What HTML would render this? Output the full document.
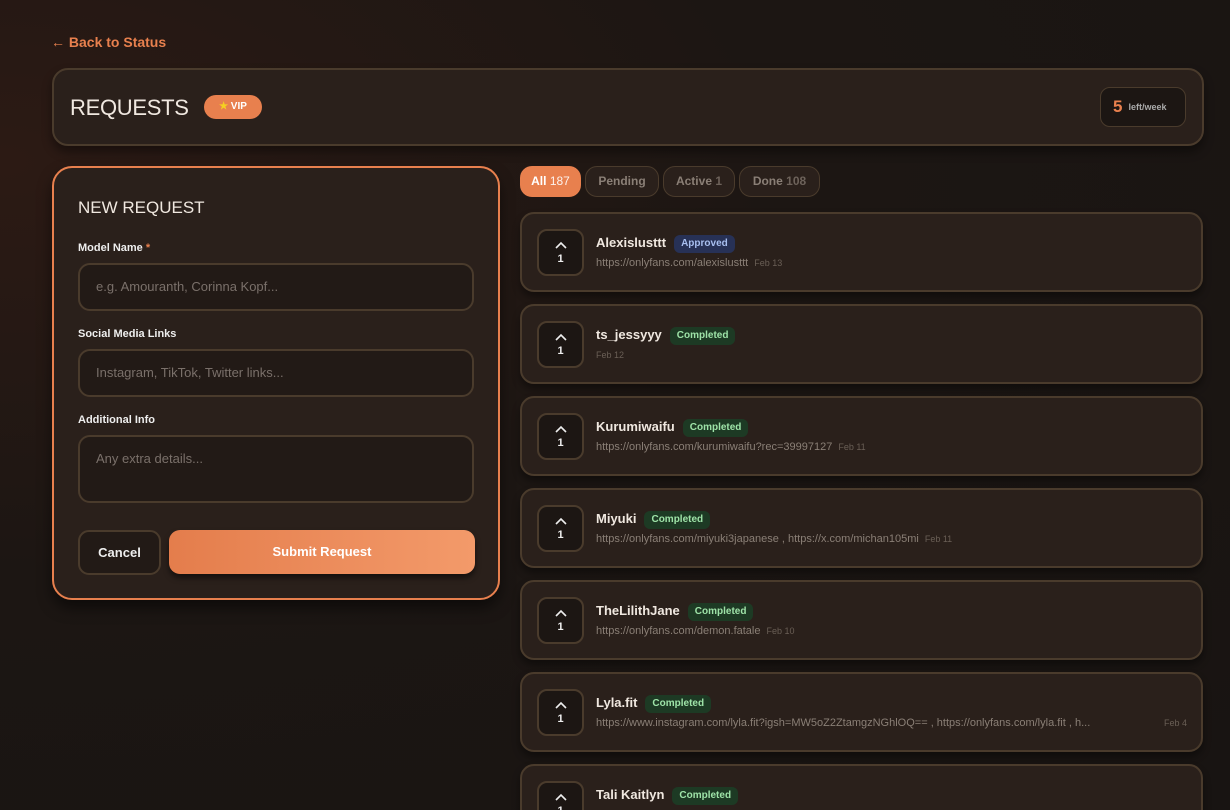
<!DOCTYPE html>
<html style="width:1230px;height:810px;overflow:hidden;background:#181412"><head><meta charset="utf-8"><style>
*{box-sizing:border-box;margin:0;padding:0}
body{width:1230px;height:810px;overflow:hidden;font-family:"Liberation Sans",sans-serif;background:radial-gradient(ellipse at 0% 20%,#2c1a14 0%,#1c1613 45%,#181412 100%);color:#eee;position:relative}
.back{position:absolute;left:51px;top:34px;color:#e8804e;font-weight:bold;font-size:14px}
.hdr{position:absolute;left:52px;top:68px;width:1152px;height:78px;border:2px solid #4a3b2c;border-radius:16px;background:#2a201b;box-shadow:0 6px 10px rgba(0,0,0,.4)}
.hdr h1{position:absolute;left:16px;top:25px;font-weight:normal;font-size:22px;color:#f0e8e0;letter-spacing:-0.3px}
.vip{position:absolute;left:148px;top:25px;width:58px;height:24px;border-radius:12px;background:#e8804e;color:#fff;font-size:10px;font-weight:bold;line-height:24px;text-align:center}
.vip span{color:#f5d020}
.left{position:absolute;left:1046px;top:17px;width:86px;height:40px;border:1px solid #4a3b2c;border-radius:10px;background:#1c1613;font-size:9px;color:#aaa;line-height:38px;padding-left:12px;font-weight:bold}
.left b{color:#e8804e;font-size:17px;vertical-align:-2px;margin-right:6px}
.form{position:absolute;left:52px;top:166px;width:448px;height:434px;border:2px solid #e8804e;border-radius:20px;background:#2a201b;box-shadow:0 8px 14px rgba(0,0,0,.5)}
.form h2{position:absolute;left:24px;top:30px;font-size:17px;font-weight:normal;color:#f0e8e0}
.lbl{position:absolute;left:24px;font-size:11px;font-weight:bold;color:#eee}
.inp{position:absolute;left:24px;width:396px;border:2px solid #4a3b2c;border-radius:12px;background:#221a16;color:#7a706a;font-size:13px;padding-left:16px;line-height:44px}
.cancel{position:absolute;left:24px;top:362px;width:83px;height:45px;border:2px solid #4a3b2c;border-radius:11px;background:#221a16;color:#eee;font-weight:bold;font-size:13px;text-align:center;line-height:41px}
.submit{position:absolute;left:115px;top:362px;width:306px;height:44px;border-radius:11px;background:linear-gradient(90deg,#e47d4c,#f39a6a);color:#fff;font-weight:bold;font-size:13px;text-align:center;line-height:44px;box-shadow:0 4px 6px rgba(0,0,0,.5)}
.tab{position:absolute;top:166px;height:31px;border:1px solid #4a3b2c;border-radius:12px;background:#2a201b;color:#8a7f76;font-weight:bold;font-size:12px;line-height:29px;text-align:center}
.tab.on{background:#e8804e;color:#fff;border-color:#e8804e}
.card{position:absolute;left:520px;width:683px;height:80px;border:2px solid #4a3b2c;border-radius:14px;background:#2a201b;box-shadow:0 5px 8px rgba(0,0,0,.4)}
.vote{position:absolute;left:15px;top:15px;width:47px;height:47px;border:2px solid #4a3b2c;border-radius:10px;background:#1c1613;text-align:center;font-size:11px;font-weight:bold;color:#eee}
.vote svg{display:block;margin:10px auto 4px}
.nm{position:absolute;left:74px;top:21px;font-size:13px;font-weight:bold;color:#f0e8e0;white-space:nowrap}
.bd{display:inline-block;margin-left:8px;height:18px;line-height:18px;padding:0 7px;border-radius:6px;font-size:10px;vertical-align:1px}
.ap{background:#273156;color:#a8bff0}
.co{background:#1d3a24;color:#9ee3a8}
.url{position:absolute;left:74px;top:43px;font-size:11px;color:#8a7f76;white-space:nowrap;max-width:600px;overflow:hidden}
.url i{font-style:normal;font-size:9px;color:#6a5f56;margin-left:6px}
.dt{position:absolute;right:14px;top:44px;font-size:9px;color:#6a5f56}
</style></head><body>
<div class="back">← Back to Status</div>
<div class="hdr"><h1>REQUESTS</h1><div class="vip" style="left:150px"><span>★</span> VIP</div><div class="left"><b>5</b>left/week</div></div>
<div class="form"><h2>NEW REQUEST</h2>
<div class="lbl" style="top:74px">Model Name <span style="color:#e8804e">*</span></div>
<div class="inp" style="top:95px;height:48px">e.g. Amouranth, Corinna Kopf...</div>
<div class="lbl" style="top:160px">Social Media Links</div>
<div class="inp" style="top:181px;height:48px">Instagram, TikTok, Twitter links...</div>
<div class="lbl" style="top:246px">Additional Info</div>
<div class="inp" style="top:267px;height:68px;line-height:44px">Any extra details...</div>
<div class="cancel">Cancel</div><div class="submit">Submit Request</div></div>
<div class="tab on" style="left:520px;width:61px">All <span style="font-weight:normal;opacity:.9">187</span></div>
<div class="tab" style="left:585px;width:74px">Pending</div>
<div class="tab" style="left:663px;width:72px">Active <span style="opacity:.7">1</span></div>
<div class="tab" style="left:739px;width:81px">Done <span style="opacity:.7">108</span></div>

<div class="card" style="top:212px"><div class="vote"><svg width="12" height="8" viewBox="0 0 12 8"><path d="M1 7L6 2L11 7" stroke="#eee" stroke-width="1.6" fill="none"/></svg>1</div><div class="nm">Alexislusttt<span class="bd ap">Approved</span></div><div class="url">https://onlyfans.com/alexislusttt<i>Feb 13</i></div></div>
<div class="card" style="top:304px"><div class="vote"><svg width="12" height="8" viewBox="0 0 12 8"><path d="M1 7L6 2L11 7" stroke="#eee" stroke-width="1.6" fill="none"/></svg>1</div><div class="nm">ts_jessyyy<span class="bd co">Completed</span></div><div class="url"><i style="margin:0">Feb 12</i></div></div>
<div class="card" style="top:396px"><div class="vote"><svg width="12" height="8" viewBox="0 0 12 8"><path d="M1 7L6 2L11 7" stroke="#eee" stroke-width="1.6" fill="none"/></svg>1</div><div class="nm">Kurumiwaifu<span class="bd co">Completed</span></div><div class="url">https://onlyfans.com/kurumiwaifu?rec=39997127<i>Feb 11</i></div></div>
<div class="card" style="top:488px"><div class="vote"><svg width="12" height="8" viewBox="0 0 12 8"><path d="M1 7L6 2L11 7" stroke="#eee" stroke-width="1.6" fill="none"/></svg>1</div><div class="nm">Miyuki<span class="bd co">Completed</span></div><div class="url">https://onlyfans.com/miyuki3japanese , https://x.com/michan105mi<i>Feb 11</i></div></div>
<div class="card" style="top:580px"><div class="vote"><svg width="12" height="8" viewBox="0 0 12 8"><path d="M1 7L6 2L11 7" stroke="#eee" stroke-width="1.6" fill="none"/></svg>1</div><div class="nm">TheLilithJane<span class="bd co">Completed</span></div><div class="url">https://onlyfans.com/demon.fatale<i>Feb 10</i></div></div>
<div class="card" style="top:672px"><div class="vote"><svg width="12" height="8" viewBox="0 0 12 8"><path d="M1 7L6 2L11 7" stroke="#eee" stroke-width="1.6" fill="none"/></svg>1</div><div class="nm">Lyla.fit<span class="bd co">Completed</span></div><div class="url" style="max-width:552px">https://www.instagram.com/lyla.fit?igsh=MW5oZ2ZtamgzNGhlOQ== , https://onlyfans.com/lyla.fit , h...</div><div class="dt">Feb 4</div></div>
<div class="card" style="top:764px"><div class="vote"><svg width="12" height="8" viewBox="0 0 12 8"><path d="M1 7L6 2L11 7" stroke="#eee" stroke-width="1.6" fill="none"/></svg>1</div><div class="nm">Tali Kaitlyn<span class="bd co">Completed</span></div></div>
</body></html>
